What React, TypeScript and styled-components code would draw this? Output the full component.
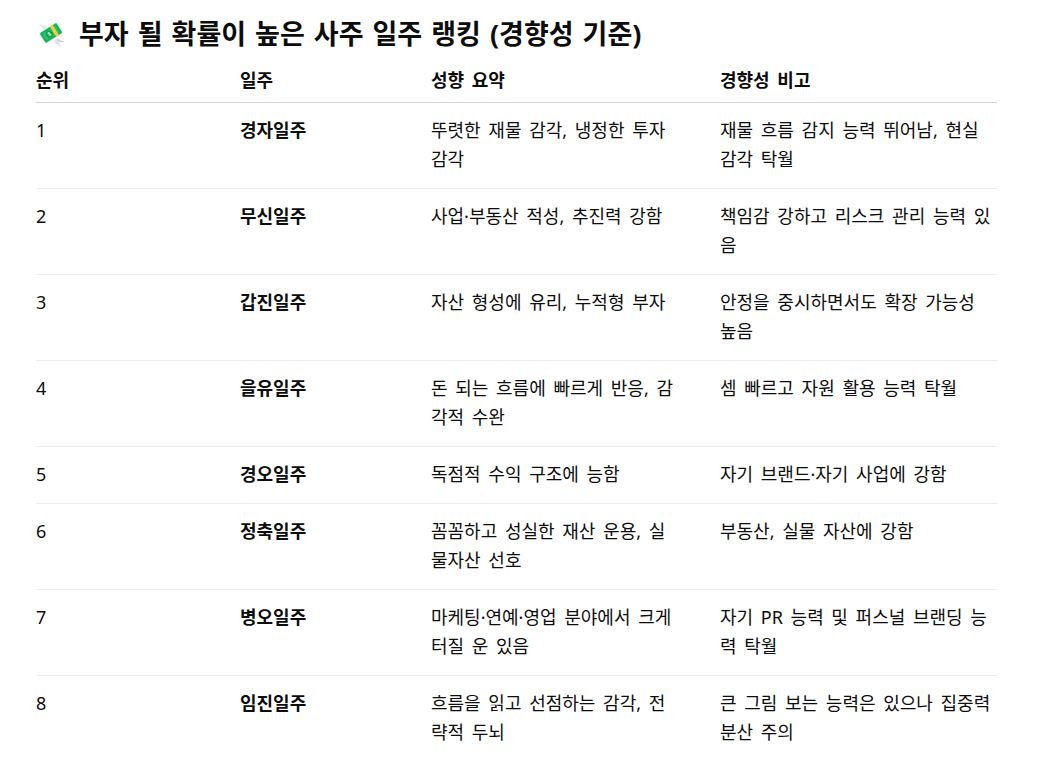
import styled, { createGlobalStyle } from "styled-components"

const GlobalStyle = createGlobalStyle`
  html, body {
    margin: 0;
    padding: 0;
    background: #ffffff;
  }
  body {
    font-family: "Noto Sans", "Noto Sans CJK KR", sans-serif;
    color: #0d0d0d;
  }
`

type Row = {
  rank: number
  pillar: string
  summary: string
  note: string
}

const rows: Row[] = [
  { rank: 1, pillar: "경자일주", summary: "뚜렷한 재물 감각, 냉정한 투자 감각", note: "재물 흐름 감지 능력 뛰어남, 현실 감각 탁월" },
  { rank: 2, pillar: "무신일주", summary: "사업·부동산 적성, 추진력 강함", note: "책임감 강하고 리스크 관리 능력 있음" },
  { rank: 3, pillar: "갑진일주", summary: "자산 형성에 유리, 누적형 부자", note: "안정을 중시하면서도 확장 가능성 높음" },
  { rank: 4, pillar: "을유일주", summary: "돈 되는 흐름에 빠르게 반응, 감각적 수완", note: "셈 빠르고 자원 활용 능력 탁월" },
  { rank: 5, pillar: "경오일주", summary: "독점적 수익 구조에 능함", note: "자기 브랜드·자기 사업에 강함" },
  { rank: 6, pillar: "정축일주", summary: "꼼꼼하고 성실한 재산 운용, 실물자산 선호", note: "부동산, 실물 자산에 강함" },
  { rank: 7, pillar: "병오일주", summary: "마케팅·연예·영업 분야에서 크게 터질 운 있음", note: "자기 PR 능력 및 퍼스널 브랜딩 능력 탁월" },
  { rank: 8, pillar: "임진일주", summary: "흐름을 읽고 선점하는 감각, 전략적 두뇌", note: "큰 그림 보는 능력은 있으나 집중력 분산 주의" },
]

const Page = styled.div`
  padding: 18px 55px 0 36px;
`

const Title = styled.h3`
  margin: 0;
  display: flex;
  align-items: center;
  gap: 13px;
  font-size: 27px;
  line-height: 32px;
  font-weight: 700;
  padding-left: 2px;
  word-spacing: 2px;
`

const Table = styled.table`
  margin-top: 16px;
  width: 961px;
  border-collapse: collapse;
  table-layout: fixed;
  font-size: 18px;
  line-height: 29px;
  word-spacing: 3px;
`

const HeadCell = styled.th`
  text-align: left;
  font-weight: 700;
  padding: 0 16px 7px;
  border-bottom: 1px solid #d4d4d4;
  &:first-child { padding-left: 0; }
  &:last-child { padding-right: 0; }
`

const BodyRow = styled.tr`
  border-bottom: 1px solid #ececec;
  &:last-child { border-bottom: none; }
`

const Cell = styled.td<{ $bold?: boolean; $narrow?: boolean }>`
  vertical-align: top;
  padding: 13px ${(p) => (p.$narrow ? 24 : 16)}px 14px 16px;
  font-weight: ${(p) => (p.$bold ? 700 : 400)};
  &:first-child { padding-left: 0; }
  &:last-child { padding-right: 0; }
`

function MoneyWings() {
  return (
    <svg width="28" height="28" viewBox="0 0 28 28" aria-hidden="true">
      <path d="M1 4 L9 6 L6 10 Z" fill="#e6e8eb" />
      <path d="M19 18 L27 22 L21 22 L23 27 L16 22 Z" fill="#e1e4e8" />
      <path d="M19 19 L26 22 L20 21.5 Z" fill="#c9ced4" />
      <g transform="rotate(-32 13 13)">
        <rect x="3" y="7" width="20" height="12" rx="1.5" fill="#22c466" />
        <rect x="4.5" y="8.5" width="17" height="9" rx="1" fill="none" stroke="#15a651" strokeWidth="1" />
        <circle cx="11" cy="13" r="3.4" fill="#139a4b" />
        <text x="11" y="15.2" fontSize="6" textAnchor="middle" fill="#b9f2cf" fontFamily="Noto Sans, sans-serif" fontWeight="700">$</text>
        <rect x="15.5" y="6.5" width="3.2" height="13" fill="#f7cd45" />
      </g>
    </svg>
  )
}

export default function App() {
  return (
    <Page>
      <GlobalStyle />
      <Title>
        <MoneyWings />
        <span>부자 될 확률이 높은 사주 일주 랭킹 (경향성 기준)</span>
      </Title>
      <Table>
        <colgroup>
          <col style={{ width: 188 }} />
          <col style={{ width: 191 }} />
          <col style={{ width: 289 }} />
          <col style={{ width: 293 }} />
        </colgroup>
        <thead>
          <tr>
            <HeadCell>순위</HeadCell>
            <HeadCell>일주</HeadCell>
            <HeadCell>성향 요약</HeadCell>
            <HeadCell>경향성 비고</HeadCell>
          </tr>
        </thead>
        <tbody>
          {rows.map((r) => (
            <BodyRow key={r.rank}>
              <Cell>{r.rank}</Cell>
              <Cell $bold>{r.pillar}</Cell>
              <Cell $narrow>{r.summary}</Cell>
              <Cell>{r.note}</Cell>
            </BodyRow>
          ))}
        </tbody>
      </Table>
    </Page>
  )
}
